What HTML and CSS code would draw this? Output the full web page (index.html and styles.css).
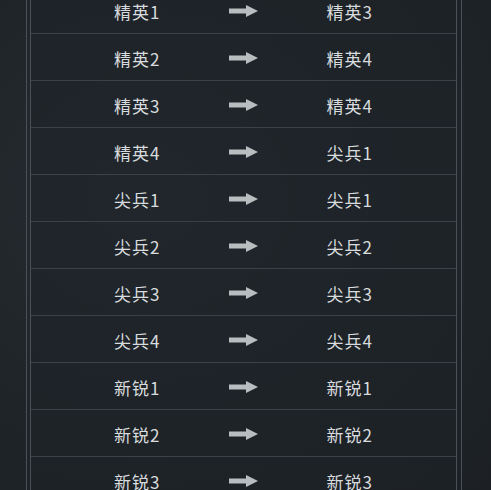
FILE: index.html
```html
<!DOCTYPE html>
<html lang="zh">
<head>
<meta charset="utf-8">
<title>晋升</title>
<link rel="stylesheet" href="styles.css">
</head>
<body>
<div class="frame">
  <div class="table">
    <div class="row"><span class="from">精英1</span><span class="arrow"><svg viewBox="0 0 29 12" width="29" height="12"><rect x="0" y="3.5" width="19" height="5" fill="currentColor"/><polygon points="17,0 29,6 17,12" fill="currentColor"/></svg></span><span class="to">精英3</span></div>
    <div class="row"><span class="from">精英2</span><span class="arrow"><svg viewBox="0 0 29 12" width="29" height="12"><rect x="0" y="3.5" width="19" height="5" fill="currentColor"/><polygon points="17,0 29,6 17,12" fill="currentColor"/></svg></span><span class="to">精英4</span></div>
    <div class="row"><span class="from">精英3</span><span class="arrow"><svg viewBox="0 0 29 12" width="29" height="12"><rect x="0" y="3.5" width="19" height="5" fill="currentColor"/><polygon points="17,0 29,6 17,12" fill="currentColor"/></svg></span><span class="to">精英4</span></div>
    <div class="row"><span class="from">精英4</span><span class="arrow"><svg viewBox="0 0 29 12" width="29" height="12"><rect x="0" y="3.5" width="19" height="5" fill="currentColor"/><polygon points="17,0 29,6 17,12" fill="currentColor"/></svg></span><span class="to">尖兵1</span></div>
    <div class="row"><span class="from">尖兵1</span><span class="arrow"><svg viewBox="0 0 29 12" width="29" height="12"><rect x="0" y="3.5" width="19" height="5" fill="currentColor"/><polygon points="17,0 29,6 17,12" fill="currentColor"/></svg></span><span class="to">尖兵1</span></div>
    <div class="row"><span class="from">尖兵2</span><span class="arrow"><svg viewBox="0 0 29 12" width="29" height="12"><rect x="0" y="3.5" width="19" height="5" fill="currentColor"/><polygon points="17,0 29,6 17,12" fill="currentColor"/></svg></span><span class="to">尖兵2</span></div>
    <div class="row"><span class="from">尖兵3</span><span class="arrow"><svg viewBox="0 0 29 12" width="29" height="12"><rect x="0" y="3.5" width="19" height="5" fill="currentColor"/><polygon points="17,0 29,6 17,12" fill="currentColor"/></svg></span><span class="to">尖兵3</span></div>
    <div class="row"><span class="from">尖兵4</span><span class="arrow"><svg viewBox="0 0 29 12" width="29" height="12"><rect x="0" y="3.5" width="19" height="5" fill="currentColor"/><polygon points="17,0 29,6 17,12" fill="currentColor"/></svg></span><span class="to">尖兵4</span></div>
    <div class="row"><span class="from">新锐1</span><span class="arrow"><svg viewBox="0 0 29 12" width="29" height="12"><rect x="0" y="3.5" width="19" height="5" fill="currentColor"/><polygon points="17,0 29,6 17,12" fill="currentColor"/></svg></span><span class="to">新锐1</span></div>
    <div class="row"><span class="from">新锐2</span><span class="arrow"><svg viewBox="0 0 29 12" width="29" height="12"><rect x="0" y="3.5" width="19" height="5" fill="currentColor"/><polygon points="17,0 29,6 17,12" fill="currentColor"/></svg></span><span class="to">新锐2</span></div>
    <div class="row"><span class="from">新锐3</span><span class="arrow"><svg viewBox="0 0 29 12" width="29" height="12"><rect x="0" y="3.5" width="19" height="5" fill="currentColor"/><polygon points="17,0 29,6 17,12" fill="currentColor"/></svg></span><span class="to">新锐3</span></div>
  </div>
</div>
</body>
</html>
```
FILE: styles.css
```css
html, body {
  margin: 0;
  padding: 0;
  height: 100%;
  overflow: hidden;
}
body {
  background: #20252a;
  background-image: radial-gradient(ellipse at 30% 40%, #252b30 0%, #1f2428 60%, #1c2024 100%);
  font-family: "Noto Sans CJK SC", "Noto Sans", sans-serif;
  color: #d9dcde;
}
.frame {
  margin: -13px 0 0 26px;
  width: 427px;
  padding: 0 4px 0 3px;
  border-left: 1px solid #4a5156;
  border-right: 1px solid #4a5156;
}
.table {
  border-left: 1px solid #4a5156;
  border-right: 1px solid #4a5156;
  background: rgba(30, 35, 40, 0.55);
}
.row {
  display: grid;
  grid-template-columns: 1fr 1fr 1fr 1fr;
  align-items: center;
  padding-top: 2px;
  box-sizing: border-box;
  border-bottom: 1px solid #3b4247;
  height: 47px;
  font-size: 17px;
  letter-spacing: 1px;
  line-height: 1;
}
.from {
  grid-row: 1;
  grid-column: 1 / 3;
  justify-self: center;
}
.arrow {
  grid-row: 1;
  grid-column: 2 / 4;
  justify-self: center;
  color: #b9bdbf;
  display: flex;
}
.to {
  grid-row: 1;
  grid-column: 3 / 5;
  justify-self: center;
}
```
